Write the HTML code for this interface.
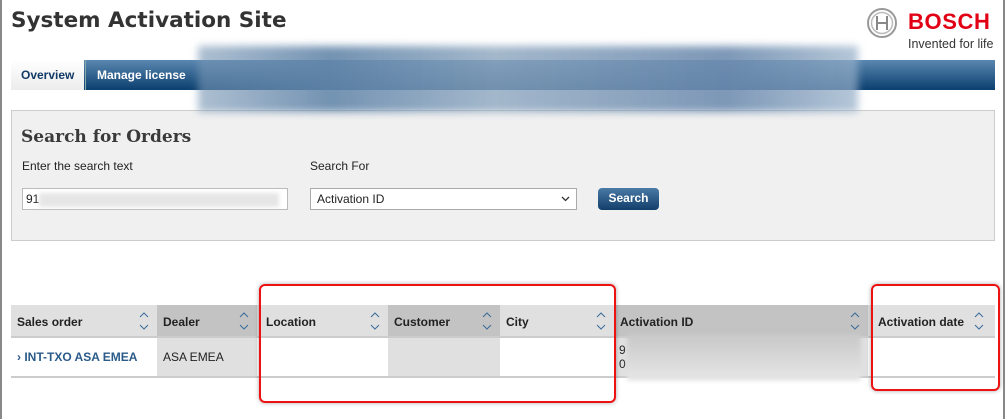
<!DOCTYPE html>
<html><head><meta charset="utf-8"><style>
*{box-sizing:border-box;margin:0;padding:0}
body{width:1005px;height:419px;background:#fff;position:relative;overflow:hidden;font-family:"Liberation Sans",Arial,sans-serif;font-size:12px;color:#222}
.abs{position:absolute}
.lb{left:0;top:0;width:2px;height:419px;background:#888}
.rb{left:1003px;top:0;width:2px;height:419px;background:#888}
h1{position:absolute;left:11px;top:8px;font-family:"DejaVu Sans",sans-serif;font-size:21.5px;font-weight:bold;color:#333}
.bar{left:11px;top:60px;width:984px;height:30px;background:linear-gradient(#5a87b0,#0b3f6f)}
.tab1{left:11px;top:60px;width:73px;height:30px;background:linear-gradient(#fff,#ececec);color:#123a66;font-weight:bold;font-size:12px;padding-top:8px;padding-left:10px}
.tab2{left:85px;top:60px;width:112px;height:30px;color:#fff;font-weight:bold;font-size:12px;padding-top:8px;padding-left:11px;border-left:1px solid #8aa}
.blur{left:198px;top:46px;width:660px;height:66px;background:linear-gradient(90deg,rgba(120,150,180,.6),rgba(100,135,170,.9) 20%,rgba(140,165,190,.8) 45%,rgba(110,140,175,.9) 80%,rgba(150,175,200,.7));filter:blur(4px)}
.panel{left:11px;top:110px;width:984px;height:131px;background:#f0f0f0;border:1px solid #ccc}
.inp{left:22px;top:188px;width:266px;height:22px;background:#fff;border:1px solid #bbb;padding:3px 3px;font-size:12px}
.sel{left:310px;top:188px;width:267px;height:22px;background:#fff;border:1px solid #aaa;padding:3px 6px;font-size:12px}
.btn{left:598px;top:188px;width:61px;height:22px;background:linear-gradient(#4a7aa6,#123e6a);border-radius:4px;color:#fff;font-weight:bold;text-align:center;padding-top:3px}
.th{top:305px;height:33px;font-weight:bold;font-size:12px;padding:10px 6px;border-bottom:2px solid #ccc}
.td{top:338px;height:40px;border-bottom:2px solid #ccc;font-size:12px;padding:12px 6px}
.s{position:absolute;right:8px;top:6px;width:10px;height:20px}
.red{border:2px solid #e11;border-radius:6px;box-shadow:0 0 4px rgba(0,0,0,.35)}
</style></head><body>
<div class="abs lb"></div><div class="abs rb"></div>
<h1>System Activation Site</h1>
<svg class="abs" style="left:866px;top:7px" width="32" height="32" viewBox="0 0 32 32"><circle cx="16" cy="16" r="14" fill="none" stroke="#999" stroke-width="2"/><circle cx="16" cy="16" r="10.5" fill="none" stroke="#bbb" stroke-width="1.5"/><path d="M11 9v14M21 9v14M11 16h10" stroke="#888" stroke-width="2" fill="none"/></svg>
<div class="abs" style="left:908px;top:9px;color:#e20015;font-weight:bold;font-size:22px;letter-spacing:0.6px">BOSCH</div>
<div class="abs" style="left:908px;top:37px;color:#333;font-size:12.5px">Invented for life</div>
<div class="abs bar"></div>
<div class="abs tab1">Overview</div>
<div class="abs tab2">Manage license</div>
<div class="abs panel"></div>
<div class="abs blur"></div>
<div class="abs" style="left:21px;top:127px;font-family:'DejaVu Serif',serif;font-weight:bold;font-size:17px;color:#3a3a3a">Search for Orders</div>
<div class="abs" style="left:22px;top:159px;font-size:12px">Enter the search text</div>
<div class="abs" style="left:310px;top:159px;font-size:12px">Search For</div>
<div class="abs inp">91<span style="display:inline-block;width:240px;height:14px;background:#e6e6e6;vertical-align:middle;filter:blur(2px)"></span></div>
<div class="abs sel">Activation ID<svg style="position:absolute;right:6px;top:7px" width="9" height="6" viewBox="0 0 9 6"><path d="M1 1l3.5 3.5L8 1" stroke="#333" stroke-width="1.3" fill="none"/></svg></div>
<div class="abs btn">Search</div>

<div class="abs th" style="left:11px;width:146px;background:#e0e0e0">Sales order<svg class="s" viewBox="0 0 10 20"><path d="M1 6l4-4 4 4M1 14l4 4 4-4" stroke="#3a6b9a" stroke-width="1" fill="none"/></svg></div>
<div class="abs th" style="left:157px;width:100px;background:#c3c3c3">Dealer<svg class="s" viewBox="0 0 10 20"><path d="M1 6l4-4 4 4M1 14l4 4 4-4" stroke="#3a6b9a" stroke-width="1" fill="none"/></svg></div>
<div class="abs th" style="left:257px;width:131px;background:#e0e0e0;padding-left:9px">Location<svg class="s" viewBox="0 0 10 20"><path d="M1 6l4-4 4 4M1 14l4 4 4-4" stroke="#3a6b9a" stroke-width="1" fill="none"/></svg></div>
<div class="abs th" style="left:388px;width:112px;background:#c3c3c3">Customer<svg class="s" viewBox="0 0 10 20"><path d="M1 6l4-4 4 4M1 14l4 4 4-4" stroke="#3a6b9a" stroke-width="1" fill="none"/></svg></div>
<div class="abs th" style="left:500px;width:114px;background:#e0e0e0">City<svg class="s" viewBox="0 0 10 20"><path d="M1 6l4-4 4 4M1 14l4 4 4-4" stroke="#3a6b9a" stroke-width="1" fill="none"/></svg></div>
<div class="abs th" style="left:614px;width:254px;background:#c3c3c3">Activation ID<svg class="s" viewBox="0 0 10 20"><path d="M1 6l4-4 4 4M1 14l4 4 4-4" stroke="#3a6b9a" stroke-width="1" fill="none"/></svg></div>
<div class="abs th" style="left:868px;width:127px;background:#e0e0e0;padding-left:10px">Activation date<svg class="s" style="right:11px" viewBox="0 0 10 20"><path d="M1 6l4-4 4 4M1 14l4 4 4-4" stroke="#3a6b9a" stroke-width="1" fill="none"/></svg></div>

<div class="abs td" style="left:11px;width:146px;color:#2a5b8a;font-weight:bold">&rsaquo; INT-TXO ASA EMEA</div>
<div class="abs td" style="left:157px;width:100px;background:#e0e0e0">ASA EMEA</div>
<div class="abs td" style="left:257px;width:131px"></div>
<div class="abs td" style="left:388px;width:112px;background:#e0e0e0"></div>
<div class="abs td" style="left:500px;width:114px"></div>
<div class="abs td" style="left:614px;width:254px;background:#e0e0e0;padding:5px 5px;line-height:14px">9<br>0</div>
<div class="abs td" style="left:868px;width:127px"></div>
<div class="abs" style="left:627px;top:334px;width:234px;height:47px;background:linear-gradient(#c8c8c8,#dadada 60%,#e8e8e8);filter:blur(2px)"></div>

<div class="abs red" style="left:259px;top:284px;width:357px;height:119px"></div>
<div class="abs red" style="left:871px;top:284px;width:129px;height:107px"></div>
</body></html>
